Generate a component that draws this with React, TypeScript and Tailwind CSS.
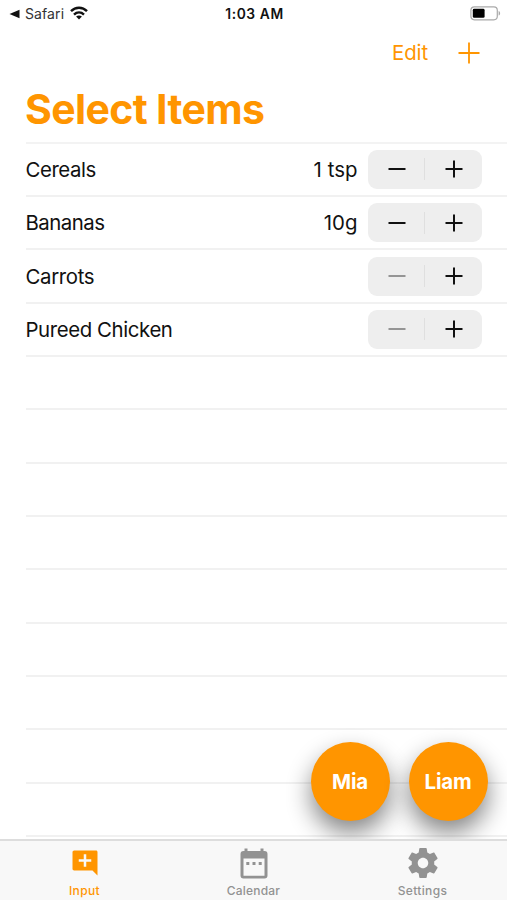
import React from "react";

type Item = { name: string; amount?: string; nameClass: string; amountClass?: string };

const items: Item[] = [
  { name: "Cereals", amount: "1 tsp", nameClass: "tracking-[-0.45px]", amountClass: "tracking-[0.05px]" },
  { name: "Bananas", amount: "10g", nameClass: "tracking-[-0.5px]", amountClass: "tracking-[0.05px]" },
  { name: "Carrots", nameClass: "tracking-[-0.35px]" },
  { name: "Pureed Chicken", nameClass: "tracking-[-0.4px]" },
];

const emptyRows = Array.from({ length: 9 }, (_, i) => i);

function Stepper({ canDecrease }: { canDecrease: boolean }) {
  return (
    <div className="flex h-[39px] w-[114px] items-center rounded-[9px] bg-[#eeeeee]">
      <button className="flex flex-1 justify-center" aria-label="Decrease">
        <svg width="18" height="18" viewBox="0 0 18 18" className={canDecrease ? "text-[#111]" : "text-[#858585]"}>
          <path d="M0.5 9H17.5" stroke="currentColor" strokeWidth={canDecrease ? 2 : 1.7} />
        </svg>
      </button>
      <div className="-ml-px h-[22px] w-px bg-[#dfdfdf]" />
      <button className="flex flex-1 justify-center" aria-label="Increase">
        <svg width="18" height="18" viewBox="0 0 18 18" className="text-[#111]">
          <path d="M0.5 9H17.5M9 0.5V17.5" stroke="currentColor" strokeWidth="2" />
        </svg>
      </button>
    </div>
  );
}

function Tab({ label, active, className, children }: { label: string; active?: boolean; className: string; children: React.ReactNode }) {
  return (
    <div className={"flex flex-1 flex-col items-center pt-1 " + (active ? "text-[#ff9500]" : "text-[#929292]")}>
      <div className="flex h-9 items-center">{children}</div>
      <span className={"mt-[2px] text-[12px] leading-[15px] font-medium " + className}>{label}</span>
    </div>
  );
}

export default function App() {
  return (
    <div className="relative flex h-[900px] w-[507px] flex-col overflow-hidden bg-white font-[Inter,'Liberation_Sans',sans-serif] text-[#111]">
      <div className="flex h-7 shrink-0 items-center justify-between pr-[6px] pl-[9px]">
        <div className="flex w-[160px] items-center">
          <svg width="11" height="10" viewBox="0 0 11 10">
            <path d="M0.5 5L10.5 0.8V9.2Z" fill="#111" />
          </svg>
          <span className="ml-[5px] text-[14px] leading-none tracking-[0.1px] text-[#333]">Safari</span>
          <svg className="ml-[6px] -translate-y-px" width="18" height="14" viewBox="0 0 18 14" fill="none" stroke="#111" strokeWidth="2.4">
            <path d="M1 5.2C5.5 0.6 12.5 0.6 17 5.2M4 8.6C6.9 5.8 11.1 5.8 14 8.6" />
            <path d="M9 13.4L6.1 10.6C7.8 9.1 10.2 9.1 11.9 10.6Z" fill="#111" stroke="none" />
          </svg>
        </div>
        <span className="pt-px pr-px text-[13.8px] leading-none font-semibold tracking-[0.6px]">1:03 AM</span>
        <div className="flex w-[160px] justify-end">
          <svg className="-translate-y-px" width="31" height="15" viewBox="0 0 31 15">
            <rect x="0.9" y="0.8" width="26.4" height="13" rx="3.5" fill="none" stroke="#aaa" strokeWidth="1.2" />
            <rect x="2.8" y="2.8" width="11.8" height="9" rx="1.4" fill="#000" />
            <path d="M28.6 5C30.6 5.7 30.6 8.9 28.6 9.6Z" fill="#aaa" />
          </svg>
        </div>
      </div>

      <div className="flex h-[49px] shrink-0 items-center justify-end gap-[30px] pr-[27px] text-[#ff9500]">
        <span className="pt-[2px] text-[20.4px] leading-none tracking-[-0.1px]">Edit</span>
        <svg width="22" height="22" viewBox="0 0 22 22">
          <path d="M0.5 11H21.5M11 0.5V21.5" stroke="currentColor" strokeWidth="1.8" />
        </svg>
      </div>

      <h1 className="h-[64.7px] shrink-0 pt-[7px] pl-[25px] text-[41px] leading-[50px] font-bold tracking-[-0.65px] text-[#ff9500]">Select Items</h1>

      <div className="ml-[25.5px] shrink-0 border-t-2 border-[#f3f3f3]">
        {items.map((item) => (
          <div key={item.name} className="flex h-[53.34px] items-center border-b-2 border-[#f1f1f1] pr-[25px] text-[20.4px] leading-none">
            <span className={"flex-1 pt-[2px] " + item.nameClass}>{item.name}</span>
            <span className={"mr-[10.5px] pt-[2px] " + (item.amountClass ?? "")}>{item.amount}</span>
            <Stepper canDecrease={Boolean(item.amount)} />
          </div>
        ))}
        {emptyRows.map((row) => (
          <div key={row} className="h-[53.34px] border-b-2 border-[#f1f1f1]" />
        ))}
      </div>

      <div className="absolute right-[19.5px] bottom-[79px] flex gap-[19px] text-[20.5px] font-bold text-white">
        <button className="flex size-[79px] items-center justify-center rounded-full bg-[#ff9500] pt-[2px] tracking-[-0.2px] shadow-[0_12px_24px_rgba(0,0,0,0.48)]">Mia</button>
        <button className="flex size-[79px] items-center justify-center rounded-full bg-[#ff9500] pt-[2px] tracking-[-0.2px] shadow-[0_12px_24px_rgba(0,0,0,0.48)]">Liam</button>
      </div>

      <div className="absolute inset-x-0 bottom-0 flex h-[61px] border-t-2 border-[#dddddd] bg-[#f8f8f8]">
        <Tab label="Input" active className="tracking-[0.4px]">
          <svg width="30" height="30" viewBox="0 0 24 24" fill="currentColor">
            <path d="M22 3.2c0-.7-.5-1.2-1.2-1.2H3.4C2.6 2 2 2.6 2 3.4v13.2c0 .8.6 1.4 1.4 1.4H18l4 4V3.2zM17 11h-4v4h-2v-4H7V9h4V5h2v4h4v2z" />
          </svg>
        </Tab>
        <Tab label="Calendar" className="tracking-[0.2px]">
          <svg width="28" height="31" viewBox="0 0 28 31" fill="currentColor">
            <path d="M4.5 0.5H7.5V3H20.5V0.5H23.5V3H24.5Q27.5 3 27.5 6V27.5Q27.5 30.5 24.5 30.5H3.5Q0.5 30.5 0.5 27.5V6Q0.5 3 3.5 3H4.5ZM3.5 10.5V27.7H24.5V10.5ZM6.3 14H9.3V17H6.3ZM12.5 14H15.5V17H12.5ZM18.7 14H21.7V17H18.7Z" fillRule="evenodd" />
          </svg>
        </Tab>
        <Tab label="Settings" className="tracking-[0.35px]">
          <svg width="36" height="36" viewBox="0 0 24 24" fill="currentColor">
            <path d="M19.43 12.98c.04-.32.07-.64.07-.98s-.03-.66-.07-.98l2.11-1.65c.19-.15.24-.42.12-.64l-2-3.46c-.12-.22-.39-.3-.61-.22l-2.49 1c-.52-.4-1.08-.73-1.69-.98l-.38-2.65C14.46 2.18 14.25 2 14 2h-4c-.25 0-.46.18-.49.42l-.38 2.65c-.61.25-1.17.59-1.69.98l-2.49-1c-.23-.09-.49 0-.61.22l-2 3.46c-.13.22-.07.49.12.64l2.11 1.65c-.04.32-.07.65-.07.98s.03.66.07.98l-2.11 1.65c-.19.15-.24.42-.12.64l2 3.46c.12.22.39.3.61.22l2.49-1c.52.4 1.08.73 1.69.98l.38 2.65c.03.24.24.42.49.42h4c.25 0 .46-.18.49-.42l.38-2.65c.61-.25 1.17-.59 1.69-.98l2.49 1c.23.09.49 0 .61-.22l2-3.46c.12-.22.07-.49-.12-.64l-2.11-1.65zM12 15.5c-1.93 0-3.5-1.57-3.5-3.5s1.57-3.5 3.5-3.5 3.5 1.57 3.5 3.5-1.57 3.5-3.5 3.5z" />
          </svg>
        </Tab>
      </div>
    </div>
  );
}
